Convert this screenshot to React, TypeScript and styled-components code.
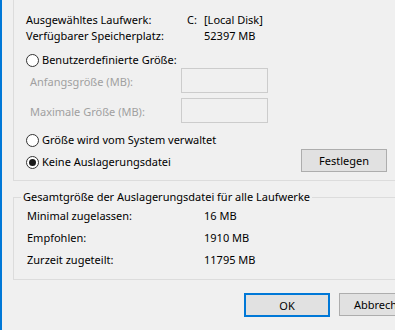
import React from 'react'
import styled, { createGlobalStyle } from 'styled-components'

const GlobalStyle = createGlobalStyle`
  html, body {
    margin: 0;
    padding: 0;
    background: #f0f0f0;
    overflow: hidden;
  }
  body {
    font-family: "Noto Sans", sans-serif;
    font-size: 11px;
    color: #000;
  }
`

const Frame = styled.div`
  width: 435px;
  height: 330px;
  box-sizing: border-box;
  border-left: 2px solid #0078d7;
  padding-left: 11px;
  display: flex;
  flex-direction: column;
`

const GroupTop = styled.div`
  width: 411px;
  border-left: 1px solid #dcdcdc;
  border-bottom: 1px solid #dcdcdc;
  padding: 12px 0 8px 12px;
  display: flex;
  flex-direction: column;
`

const InfoGrid = styled.div`
  display: grid;
  grid-template-columns: 161px 17px auto;
  grid-auto-rows: 16px;
  line-height: 16px;
`

const RadioRow = styled.label<{ $top?: number }>`
  display: flex;
  align-items: center;
  gap: 3px;
  height: 16px;
  line-height: 16px;
  margin-top: ${({ $top }) => $top ?? 0}px;
`

const Radio = styled.span<{ $checked?: boolean }>`
  width: 13px;
  height: 13px;
  box-sizing: border-box;
  border: 1px solid #333;
  border-radius: 50%;
  background: #fff;
  display: flex;
  align-items: center;
  justify-content: center;
  &::after {
    content: '';
    width: 7px;
    height: 7px;
    border-radius: 50%;
    background: ${({ $checked }) => ($checked ? '#1a1a1a' : 'transparent')};
  }
`

const FieldRow = styled.div<{ $top?: number }>`
  display: flex;
  align-items: center;
  margin-top: ${({ $top }) => $top ?? 0}px;
  padding-left: 4px;
`

const DimLabel = styled.span`
  width: 151px;
  color: #a0a0a0;
  padding-top: 2px;
`

const SizeBox = styled.div`
  width: 87px;
  height: 25px;
  box-sizing: border-box;
  border: 1px solid #cccccc;
  background: #f0f0f0;
`

const SetRow = styled.div`
  display: flex;
  align-items: center;
  margin-top: 1px;
  width: 361px;
  justify-content: space-between;
`

const Button = styled.button<{ $default?: boolean }>`
  width: 86px;
  height: ${({ $default }) => ($default ? 24 : 23)}px;
  box-sizing: border-box;
  background: #e1e1e1;
  border: ${({ $default }) => ($default ? '2px solid #0078d7' : '1px solid #adadad')};
  font: inherit;
  color: #000;
  padding: 0;
  white-space: nowrap;
`

const TotalGroup = styled.fieldset`
  width: 411px;
  margin: 8px 0 0 0;
  padding: 3px 0 11px 13px;
  border: 1px solid #dcdcdc;
  border-right: none;
  box-sizing: border-box;
`

const Legend = styled.legend`
  margin-left: -6px;
  padding: 0 2px;
  line-height: 16px;
`

const TotalGrid = styled.div`
  display: grid;
  grid-template-columns: 177px auto;
  grid-auto-rows: 16px;
  row-gap: 6px;
  line-height: 16px;
`

const Buttons = styled.div`
  display: flex;
  gap: 9px;
  margin-top: 13px;
  padding-left: 231px;
`

export default function App() {
  return (
    <>
      <GlobalStyle />
      <Frame>
        <GroupTop>
          <InfoGrid>
            <span>Ausgewähltes Laufwerk:</span>
            <span>C:</span>
            <span>[Local Disk]</span>
            <span>Verfügbarer Speicherplatz:</span>
            <span />
            <span>52397 MB</span>
          </InfoGrid>
          <RadioRow $top={8}>
            <Radio />
            Benutzerdefinierte Größe:
          </RadioRow>
          <FieldRow>
            <DimLabel>Anfangsgröße (MB):</DimLabel>
            <SizeBox />
          </FieldRow>
          <FieldRow $top={5}>
            <DimLabel>Maximale Größe (MB):</DimLabel>
            <SizeBox />
          </FieldRow>
          <RadioRow $top={9}>
            <Radio />
            Größe wird vom System verwaltet
          </RadioRow>
          <SetRow>
            <RadioRow $top={3}>
              <Radio $checked />
              Keine Auslagerungsdatei
            </RadioRow>
            <Button>Festlegen</Button>
          </SetRow>
        </GroupTop>
        <TotalGroup>
          <Legend>Gesamtgröße der Auslagerungsdatei für alle Laufwerke</Legend>
          <TotalGrid>
            <span>Minimal zugelassen:</span>
            <span>16 MB</span>
            <span>Empfohlen:</span>
            <span>1910 MB</span>
            <span>Zurzeit zugeteilt:</span>
            <span>11795 MB</span>
          </TotalGrid>
        </TotalGroup>
        <Buttons>
          <Button $default>OK</Button>
          <Button>Abbrechen</Button>
        </Buttons>
      </Frame>
    </>
  )
}
